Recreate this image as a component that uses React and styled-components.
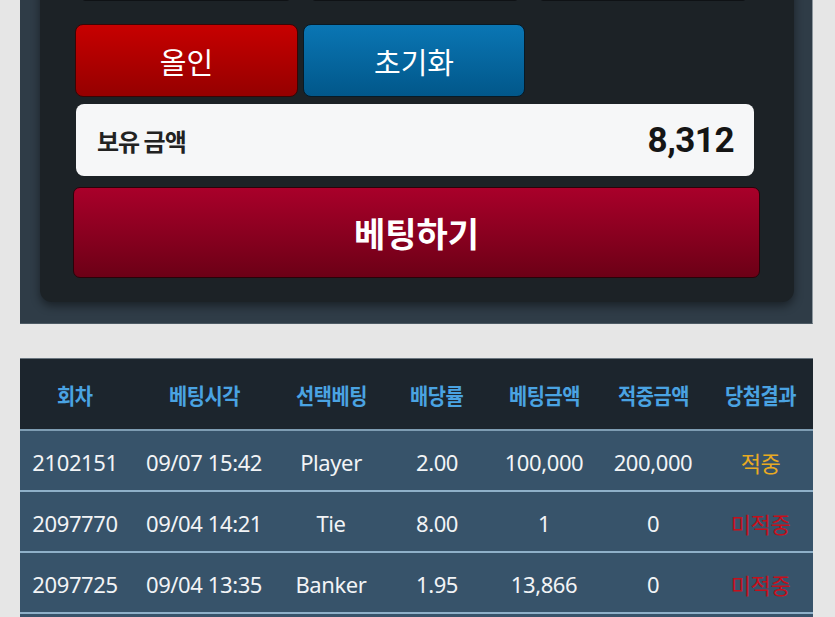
import React from "react";
import styled, { createGlobalStyle } from "styled-components";

const Global = createGlobalStyle`
  html, body { margin: 0; padding: 0; background: #e6e6e6; overflow: hidden; }
  body { font-family: "Noto Sans", "Noto Sans CJK KR", sans-serif; }
  * { box-sizing: border-box; }
`;

const Page = styled.div`
  width: 835px;
  height: 617px;
  overflow: hidden;
  padding: 0 22px 0 20px;
`;

const Panel = styled.section`
  margin-top: -60px;
  background: #2f3c47;
  padding: 0 18px 21px 20px;
  border-bottom: 1px solid #4d5a64;
  border-right: 1px solid #8d979e;
`;

const Card = styled.div`
  background: #1c2226;
  border-radius: 0 0 12px 12px;
  padding: 0 34px 24px 33px;
  box-shadow: 0 4px 10px rgba(0, 0, 0, 0.45);
`;

const ChipRow = styled.div`
  display: grid;
  grid-template-columns: 212px 210px 210px;
  gap: 18px;
  padding-left: 7px;
`;

const Chip = styled.div`
  height: 61px;
  background: #0f1215;
  border-radius: 0 0 6px 6px;
`;

const ActionRow = styled.div`
  display: grid;
  grid-template-columns: 223px 222px 1fr;
  gap: 5px;
  margin: 23px 0 0 2px;
`;

const ActionButton = styled.button`
  height: 73px;
  border: 1px solid ${(p) => (p.$tone === "red" ? "#3a0505" : "#071a26")};
  border-radius: 8px;
  background: ${(p) =>
    p.$tone === "red"
      ? "linear-gradient(#c70000, #950000)"
      : "linear-gradient(#0a76b4, #01578a)"};
  color: #fff;
  font-family: "Noto Sans CJK KR", sans-serif;
  font-size: 29px;
  font-weight: 400;
  padding: 0;
  cursor: pointer;
`;

const Balance = styled.div`
  margin: 7px 6px 0 3px;
  height: 72px;
  border-radius: 8px;
  background: #f6f7f8;
  display: flex;
  align-items: center;
  justify-content: space-between;
  padding: 0 20px 0 21px;
`;

const BalanceLabel = styled.span`
  font-family: "Noto Sans CJK KR", sans-serif;
  font-size: 24px;
  font-weight: 700;
  color: #222;
  letter-spacing: -1px;
`;

const BalanceValue = styled.span`
  font-family: Roboto, sans-serif;
  font-size: 35px;
  font-weight: 700;
  color: #151515;
  letter-spacing: -0.5px;
`;

const BetButton = styled.button`
  display: block;
  width: 100%;
  margin-top: 11px;
  height: 91px;
  border: 1px solid #2a0209;
  border-radius: 7px;
  background: linear-gradient(#a9002a, #6c0016);
  color: #fff;
  font-family: "Noto Sans CJK KR", sans-serif;
  font-size: 34px;
  font-weight: 700;
  padding: 0;
  cursor: pointer;
`;

const Table = styled.div`
  margin-top: 34px;
  border-top: 1px solid #6a7680;
  background: #37536a;
  padding-bottom: 30px;
`;

const cols = "110px 148px 106px 106px 108px 110px 105px";

const HeadRow = styled.div`
  display: grid;
  grid-template-columns: ${cols};
  height: 72px;
  align-items: center;
  background: #1c252d;
  border-bottom: 2px solid #7e9db3;
`;

const HeadCell = styled.div`
  display: flex;
  justify-content: center;
  white-space: nowrap;
`;

const HeadText = styled.span`
  display: inline-block;
  font-family: "Noto Sans CJK KR", sans-serif;
  font-size: 22px;
  font-weight: 700;
  color: #4aa3e2;
  transform: scaleX(0.9);
  letter-spacing: -0.5px;
`;

const Row = styled.div`
  display: grid;
  grid-template-columns: ${cols};
  height: 61px;
  align-items: center;
  background: #37536a;
  border-bottom: 2px solid #8fb0c8;
`;

const Cell = styled.div`
  text-align: center;
  font-family: "Noto Sans", "Noto Sans CJK KR", sans-serif;
  font-size: 22px;
  color: ${(p) => (p.$status === "win" ? "#e8aa22" : p.$status === "lose" ? "#c3101c" : "#f2f4f6")};
  white-space: nowrap;
  letter-spacing: -0.4px;
  padding-top: 2px;
`;

const headers = ["회차", "베팅시각", "선택베팅", "배당률", "베팅금액", "적중금액", "당첨결과"];

const rows = [
  ["2102151", "09/07 15:42", "Player", "2.00", "100,000", "200,000", "적중", "win"],
  ["2097770", "09/04 14:21", "Tie", "8.00", "1", "0", "미적중", "lose"],
  ["2097725", "09/04 13:35", "Banker", "1.95", "13,866", "0", "미적중", "lose"],
];

export default function App() {
  return (
    <>
      <Global />
      <Page>
        <Panel>
          <Card>
            <ChipRow>
              <Chip />
              <Chip />
              <Chip />
            </ChipRow>
            <ActionRow>
              <ActionButton $tone="red">올인</ActionButton>
              <ActionButton $tone="blue">초기화</ActionButton>
            </ActionRow>
            <Balance>
              <BalanceLabel>보유 금액</BalanceLabel>
              <BalanceValue>8,312</BalanceValue>
            </Balance>
            <BetButton>베팅하기</BetButton>
          </Card>
        </Panel>
        <Table>
          <HeadRow>
            {headers.map((h) => (
              <HeadCell key={h}>
                <HeadText>{h}</HeadText>
              </HeadCell>
            ))}
          </HeadRow>
          {rows.map((r) => (
            <Row key={r[0]}>
              {r.slice(0, 6).map((v, i) => (
                <Cell key={i}>{v}</Cell>
              ))}
              <Cell $status={r[7]}>{r[6]}</Cell>
            </Row>
          ))}
        </Table>
      </Page>
    </>
  );
}
